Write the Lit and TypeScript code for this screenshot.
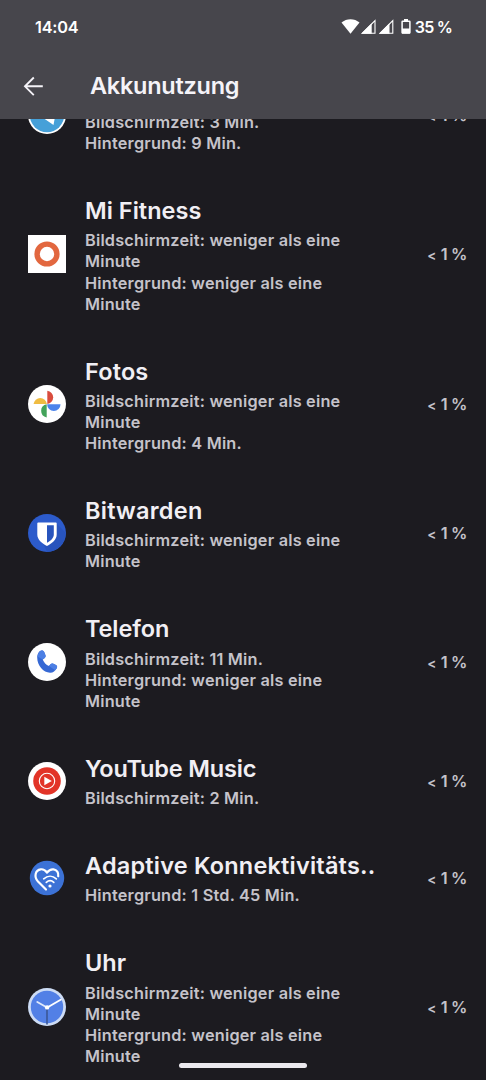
import { LitElement, html, svg, css, nothing } from "lit";
import { customElement, property } from "lit/decorators.js";

interface Usage {
  icon: string;
  name: string;
  tracking: number;
  lines: string[];
}

const WENIGER = "weniger als eine Minute";

const APPS: Usage[] = [
  { icon: "telegram", name: "", tracking: 0, lines: ["Bildschirmzeit: 3 Min.", "Hintergrund: 9 Min."] },
  { icon: "fitness", name: "Mi Fitness", tracking: 0.03, lines: [`Bildschirmzeit: ${WENIGER}`, `Hintergrund: ${WENIGER}`] },
  { icon: "photos", name: "Fotos", tracking: 0.15, lines: [`Bildschirmzeit: ${WENIGER}`, "Hintergrund: 4 Min."] },
  { icon: "bitwarden", name: "Bitwarden", tracking: 0.25, lines: [`Bildschirmzeit: ${WENIGER}`] },
  { icon: "phone", name: "Telefon", tracking: -0.1, lines: ["Bildschirmzeit: 11 Min.", `Hintergrund: ${WENIGER}`] },
  { icon: "ytmusic", name: "YouTube Music", tracking: -0.17, lines: ["Bildschirmzeit: 2 Min."] },
  { icon: "adaptive", name: "Adaptive Konnektivitäts..", tracking: 0.2, lines: ["Hintergrund: 1 Std. 45 Min."] },
  { icon: "clock", name: "Uhr", tracking: 0, lines: [`Bildschirmzeit: ${WENIGER}`, `Hintergrund: ${WENIGER}`] },
];

const ICONS: Record<string, unknown> = {
  telegram: svg`
    <circle cx="19" cy="19" r="19" fill="#fff"/>
    <circle cx="19" cy="19" r="17.2" fill="#46a0d8"/>
    <path d="M7 18.500 29 10 25.500 29 16 22.500 24 13.500 12.500 20.500Z" fill="#fff"/>`,
  fitness: svg`
    <rect width="38" height="38" fill="#fff"/>
    <circle cx="19" cy="19" r="9.9" fill="none" stroke="#e2673f" stroke-width="5.4"/>`,
  photos: svg`
    <circle cx="19" cy="19" r="19" fill="#fff"/>
    <path d="M19.3 5.7a6.7 6.7 0 0 1 0 13.300Z" fill="#d94c3d"/>
    <path d="M32.500 19.200a6.700 6.700 0 0 1-13.400 0Z" fill="#4a83ec"/>
    <path d="M18.700 32.400a6.700 6.700 0 0 1 0-13.200Z" fill="#43a35a"/>
    <path d="M5.600 18.900a6.700 6.700 0 0 1 13.300 0Z" fill="#f0bc42"/>`,
  bitwarden: svg`
    <circle cx="19" cy="19" r="19" fill="#2c5bcb"/>
    <path d="M28 9 37.500 18.500A19 19 0 0 1 19 38L15 29Z" fill="#2854bd"/>
    <path d="M9.300 9.300a.9.9 0 0 1 .9-.9h17.600a.9.9 0 0 1 .9.9v11.200c0 5.200-4.600 8.800-9.700 11.500-5.100-2.700-9.700-6.300-9.700-11.500Z" fill="#fff"/>
    <path d="M19 11.300h6.800v9.200c0 3.500-3 6.100-6.800 8.300Z" fill="#2854bd"/>`,
  phone: svg`
    <circle cx="19" cy="19" r="19" fill="#fff"/>
    <path d="M9.200 14.500c0-3.400 1.700-6.300 4.200-6.900 1.300-.3 2.300.3 2.800 1.500l1.200 3c.5 1.300.1 2.300-1 3.100l-1.700 1.200c1.200 3 3.300 5.300 6.300 6.700l1.300-1.600c.9-1.100 1.900-1.400 3.100-.8l2.600 1.300c1.300.7 1.500 2 .6 3.400-1.300 2.200-3.400 4.200-6.300 4.300C15.500 29.900 9.200 22.500 9.200 14.500Z" fill="#3568d4"/>
    <path d="M13.400 7.600c1.300-.3 2.300.3 2.800 1.500l1.200 3c.5 1.300.1 2.300-1 3.100l-1.700 1.200-4.900-2.600c0-3 1.400-5.700 3.600-6.200ZM21 23.100l1.300-1.600c.9-1.100 1.900-1.400 3.100-.8l2.600 1.300c1.300.7 1.500 2 .6 3.400l-1.400 1.800Z" fill="#4c7fe4"/>`,
  ytmusic: svg`
    <circle cx="19" cy="19" r="19" fill="#fff"/>
    <circle cx="19" cy="19" r="13.800" fill="#e23428"/>
    <circle cx="19" cy="19" r="7.700" fill="none" stroke="#fff" stroke-width="1.100"/>
    <path d="M16.300 14.700 23.800 19l-7.500 4.300Z" fill="#fff"/>`,
  adaptive: svg`
    <circle cx="19" cy="19" r="17.200" fill="#3c72d6"/>
    <g fill="none" stroke="#fff" stroke-width="2.200" stroke-linecap="round" stroke-linejoin="round">
      <path d="M18 30.500 10 22.500C5.800 18 7.100 11 12.700 10.300c3-.4 4.900 1.300 6.300 3.200 1.700-2.100 3.700-3.500 6.500-3.100 3.400.5 5.300 3.400 4.700 6.800"/>
      <path d="M15.700 19.800c3.900-3.400 8.900-3.400 12.600 0" stroke-width="1.700"/>
      <path d="M18.300 23.400c2.400-2.100 5.200-2.100 7.500 0" stroke-width="1.700"/>
    </g>
    <circle cx="22" cy="27" r="1.600" fill="#fff"/>`,
  clock: svg`
    <circle cx="19" cy="19" r="19" fill="#cddcf5"/>
    <circle cx="19" cy="19" r="16.200" fill="#5280e6"/>
    <path d="M19 20.500V36.500" stroke="#3b5796" stroke-width="1.600"/>
    <path d="M19.300 19.500 33.500 11.300" stroke="#fff" stroke-width="1.900"/>
    <path d="M19 19.500 9.300 14" stroke="#dfe9fb" stroke-width="1.900" stroke-linecap="round"/>
    <circle cx="19.100" cy="19.400" r="2.200" fill="#fff"/>`,
};

@customElement("usage-row")
class UsageRow extends LitElement {
  @property({ attribute: false }) app?: Usage;

  static styles = css`
    :host {
      display: flex;
      align-items: center;
      padding: 19.900px 19px 19.900px 28px;
      box-sizing: border-box;
    }
    .icon { flex: none; width: 38px; height: 38px; display: block; }
    .text { width: 300px; margin-left: 19px; padding-top: 2px; flex: none; }
    .name {
      min-height: 29.300px;
      margin-bottom: 5px;
      font-size: 23.500px;
      line-height: 29.300px;
      font-weight: 600;
      color: #f1eff4;
      white-space: nowrap;
    }
    .line {
      font-size: 16.300px;
      line-height: 21.130px;
      font-weight: 600;
      letter-spacing: 0.200px;
      color: #c5c3ca;
      max-width: 275px;
    }
    .share {
      margin-left: auto;
      font-size: 16.300px;
      font-weight: 600;
      color: #c5c3ca;
      white-space: nowrap;
      letter-spacing: -0.400px;
    }
    .less { font-size: 13.500px; letter-spacing: 0.900px; }
  `;

  render() {
    if (!this.app) return nothing;
    return html`
      <svg class="icon" viewBox="0 0 38 38">${ICONS[this.app.icon]}</svg>
      <div class="text">
        <div class="name" style="letter-spacing:${this.app.tracking}px">${this.app.name}</div>
        ${this.app.lines.map((l) => html`<div class="line">${l}</div>`)}
      </div>
      <div class="share"><span class="less">&lt;</span> 1 %</div>
    `;
  }
}

@customElement("app-root")
class AppRoot extends LitElement {
  static styles = css`
    :host {
      display: flex;
      flex-direction: column;
      position: relative;
      width: 486px;
      height: 1080px;
      overflow: hidden;
      background: #1c1b20;
      font-family: Inter, "Open Sans", sans-serif;
    }
    .top {
      flex: none;
      height: 119px;
      background: #47464c;
      color: #f5f3f8;
    }
    .status {
      display: flex;
      align-items: center;
      justify-content: space-between;
      height: 53px;
      padding: 0 34px 0 35px;
      box-sizing: border-box;
      font-size: 16.300px;
      font-weight: 600;
      color: #fff;
    }
    .time { letter-spacing: -0.200px; }
    .signals { display: flex; align-items: center; }
    .glyphs { display: block; width: 70px; height: 18px; margin-right: 4px; }
    .level { font-size: 16px; letter-spacing: -0.800px; }
    .bar { display: flex; align-items: center; height: 66px; padding-left: 23px; }
    .back { width: 21px; height: 21px; display: block; }
    h1 { margin: 0 0 0 46px; font-size: 23.500px; font-weight: 600; line-height: 30px; letter-spacing: -0.250px; }
    .viewport { flex: 1; min-height: 0; overflow: hidden; }
    .list { margin-top: -63.200px; }
    .handle {
      position: absolute;
      left: 179px;
      top: 1063px;
      width: 128px;
      height: 5px;
      border-radius: 3px;
      background: #ebe9ee;
    }
  `;

  render() {
    return html`
      <header class="top">
        <div class="status">
          <span class="time">14:04</span>
          <span class="signals">
            <svg class="glyphs" viewBox="0 0 70 18">
              <path d="M.5 4.600C5.500 0 13.500 0 18.500 4.600L9.500 15.800Z" fill="#fff"/>
              <g fill="none" stroke="#fff" stroke-width="1.100">
                <path d="M21.500 15.200 34 2.700V15.200ZM39.300 15.200 51.800 2.700V15.200Z"/>
              </g>
              <path d="M20 15.800 30.700 5.300V15.800ZM37.800 15.800 48.500 5.300V15.800Z" fill="#fff"/>
              <path d="M61.700 3.200h6.600a.6.600 0 0 1 .6.600v10.600a.7.700 0 0 1-.7.700h-6.400a.7.700 0 0 1-.7-.7V3.800a.6.600 0 0 1 .6-.6Z" fill="none" stroke="#fff" stroke-width="1.500"/>
              <path d="M63 1h4V3.500h-4ZM61 10.500h8v5h-8Z" fill="#fff"/>
            </svg>
            <span class="level">35 %</span>
          </span>
        </div>
        <div class="bar">
          <svg class="back" viewBox="0 0 21 21" fill="none" stroke="#f5f3f8" stroke-width="1.900">
            <path d="M10.800 1.500 2 10.300l8.800 8.800M2 10.300h17.800"/>
          </svg>
          <h1>Akkunutzung</h1>
        </div>
      </header>
      <div class="viewport">
        <main class="list">
          ${APPS.map((a) => html`<usage-row .app=${a}></usage-row>`)}
        </main>
      </div>
      <div class="handle"></div>
    `;
  }
}
